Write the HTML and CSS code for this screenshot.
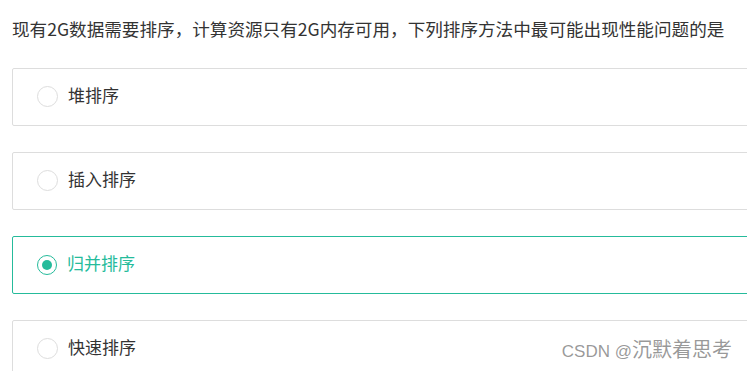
FILE: index.html
```html
<!DOCTYPE html>
<html lang="zh-CN">
<head>
    <meta charset="UTF-8">
    <meta name="viewport" content="width=device-width, initial-scale=1.0">
    <title>排序题</title>
    <link rel="stylesheet" href="styles.css">
</head>
<body>

    <div class="question">
        <p class="question-title">现有2G数据需要排序，计算资源只有2G内存可用，下列排序方法中最可能出现性能问题的是</p>

        <!-- 选项 -->
        <div class="option">
            <span class="radio"></span>
            <span class="option-text">堆排序</span>
        </div>
        <div class="option">
            <span class="radio"></span>
            <span class="option-text">插入排序</span>
        </div>
        <div class="option checked">
            <span class="radio"></span>
            <span class="option-text">归并排序</span>
        </div>
        <div class="option">
            <span class="radio"></span>
            <span class="option-text">快速排序</span>
        </div>
    </div>

    <div class="watermark">CSDN @<span class="watermark-name">沉默着思考</span></div>

</body>
</html>
```

FILE: styles.css
```css
body {
    margin: 0;
    padding: 0;
    background-color: #fff;
    color: #333;
    font-family: "Noto Sans CJK SC", "Liberation Sans", sans-serif;
    overflow: hidden;
    height: 371px;
}

.question {
    padding: 17px 0 0 12px;
    width: 760px;
}

.question-title {
    margin: 0 0 27px 0;
    font-size: 17.6px;
    line-height: 24px;
    white-space: nowrap;
}

.option {
    display: flex;
    align-items: center;
    height: 56px;
    margin-bottom: 26px;
    padding-left: 24px;
    border: 1px solid #ddd;
    border-radius: 2px;
    cursor: pointer;
}

.radio {
    width: 19px;
    height: 19px;
    border: 1px solid #ddd;
    border-radius: 50%;
    display: flex;
    justify-content: center;
    align-items: center;
    margin-bottom: 1px;
}

.option-text {
    margin-left: 10px;
    font-size: 17px;
    line-height: 20px;
    margin-bottom: 4px;
}

/* 选中状态 */
.option.checked {
    border-color: #25bb9b;
}

.option.checked .radio {
    width: 18px;
    height: 18px;
    border: 1.5px solid #25bb9b;
}

.option.checked .radio::after {
    content: "";
    width: 10px;
    height: 10px;
    border-radius: 50%;
    background-color: #25bb9b;
}

.option.checked .option-text {
    color: #25bb9b;
}

.watermark {
    position: absolute;
    right: 15px;
    bottom: 8px;
    color: rgba(120, 120, 120, 0.75);
    font-family: "Liberation Sans", "Noto Sans CJK SC", sans-serif;
    font-size: 17px;
}

.watermark-name {
    font-family: "Noto Sans CJK SC", sans-serif;
    font-size: 20px;
}
```
